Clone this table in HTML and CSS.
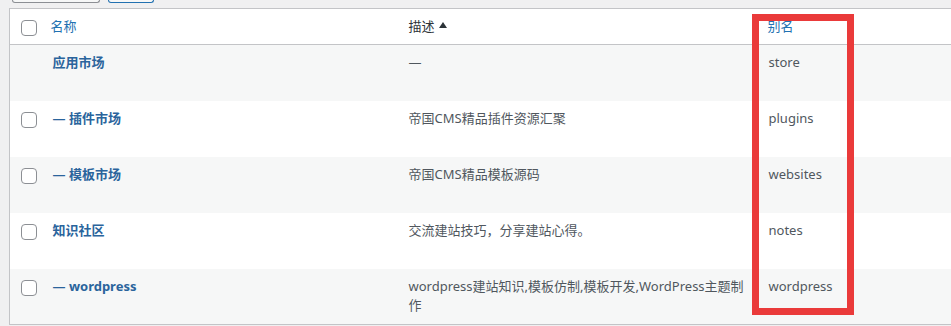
FILE: index.html
```html
<!DOCTYPE html>
<html lang="zh-CN">
<head>
    <meta charset="UTF-8">
    <meta name="viewport" content="width=device-width, initial-scale=1.0">
    <title>分类目录</title>
    <link rel="stylesheet" href="styles.css">
</head>
<body>
    <div class="tablenav">
        <span class="btn btn-select"></span>
        <span class="btn btn-apply"></span>
    </div>

    <table class="list-table">
        <thead>
            <tr>
                <th class="col-check"><span class="checkbox"></span></th>
                <th class="col-name"><a href="#">名称</a></th>
                <th class="col-desc sorted"><a href="#">描述 <span class="sort-arrow"></span></a></th>
                <th class="col-slug"><a href="#">别名</a></th>
            </tr>
        </thead>
        <tbody>
            <tr class="alt">
                <td class="col-check"></td>
                <td class="col-name"><a class="row-title" href="#">应用市场</a></td>
                <td class="col-desc">—</td>
                <td class="col-slug">store</td>
            </tr>
            <tr>
                <td class="col-check"><span class="checkbox"></span></td>
                <td class="col-name"><a class="row-title" href="#">— 插件市场</a></td>
                <td class="col-desc">帝国CMS精品插件资源汇聚</td>
                <td class="col-slug">plugins</td>
            </tr>
            <tr class="alt">
                <td class="col-check"><span class="checkbox"></span></td>
                <td class="col-name"><a class="row-title" href="#">— 模板市场</a></td>
                <td class="col-desc">帝国CMS精品模板源码</td>
                <td class="col-slug">websites</td>
            </tr>
            <tr>
                <td class="col-check"><span class="checkbox"></span></td>
                <td class="col-name"><a class="row-title" href="#">知识社区</a></td>
                <td class="col-desc">交流建站技巧，分享建站心得。</td>
                <td class="col-slug">notes</td>
            </tr>
            <tr class="alt">
                <td class="col-check"><span class="checkbox"></span></td>
                <td class="col-name"><a class="row-title" href="#">— wordpress</a></td>
                <td class="col-desc">wordpress建站知识,模板仿制,模板开发,WordPress主题制作</td>
                <td class="col-slug">wordpress</td>
            </tr>
        </tbody>
    </table>

    <!-- highlight around the slug column -->
    <div class="highlight-box"></div>
</body>
</html>
```

FILE: styles.css
```css
body {
    margin: 0;
    background-color: #f0f0f1;
    font-family: "Noto Sans", "Noto Sans CJK SC", sans-serif;
    font-size: 13px;
    color: #50575e;
    overflow: hidden;
    position: relative;
    width: 951px;
    height: 326px;
}
a {
    text-decoration: none;
    color: #2271b1;
}
.tablenav {
    height: 8px;
    display: flex;
    align-items: flex-start;
    padding-left: 12px;
    gap: 8px;
}
.btn {
    display: block;
    height: 2px;
    border: 1px solid #8c8f94;
    border-top: none;
    border-radius: 0 0 3px 3px;
    background-color: #f6f7f7;
}
.btn-select {
    width: 86px;
}
.btn-apply {
    width: 44px;
    border-color: #2271b1;
}
.list-table {
    margin-left: 9px;
    width: 1000px;
    border-collapse: collapse;
    table-layout: fixed;
    background-color: #fff;
    border: 1px solid #c3c4c7;
}
.list-table th, .list-table td {
    text-align: left;
    vertical-align: top;
    padding: 0 10px;
    line-height: 19px;
}
.list-table th {
    height: 35px;
    vertical-align: middle;
    font-weight: normal;
    font-size: 13px;
    border-bottom: 1px solid #c3c4c7;
}
.list-table td {
    height: 56px;
    padding-top: 8px;
    box-sizing: border-box;
}
.list-table tr.alt td {
    background-color: #f6f7f7;
}
.col-check {
    width: 33px;
    box-sizing: border-box;
}
.list-table .col-check {
    padding: 0 0 0 11px;
}
.list-table td.col-check {
    padding-top: 11px;
}
.list-table th.col-check {
    padding-top: 2px;
}
.col-name {
    width: 356px;
    box-sizing: border-box;
}
.col-desc {
    width: 359px;
    box-sizing: border-box;
}
.list-table td.col-name {
    padding-left: 10px;
}
.list-table th.col-name {
    padding-left: 8px;
}
.list-table td.col-slug {
    padding-left: 11px;
}
.sorted a {
    color: #2c3338;
}
.sort-arrow {
    display: inline-block;
    width: 0;
    height: 0;
    border-left: 4px solid transparent;
    border-right: 4px solid transparent;
    border-bottom: 6px solid #2c3338;
    margin-left: 1px;
    vertical-align: 3px;
}
.row-title {
    font-weight: bold;
    color: #2a649c;
}
.checkbox {
    display: block;
    width: 14px;
    height: 14px;
    border: 1px solid #8c8f94;
    border-radius: 4px;
    background-color: #fff;
}
.highlight-box {
    position: absolute;
    left: 752px;
    top: 14px;
    width: 88px;
    height: 287px;
    border: 7px solid #ea3a3a;
}
```
